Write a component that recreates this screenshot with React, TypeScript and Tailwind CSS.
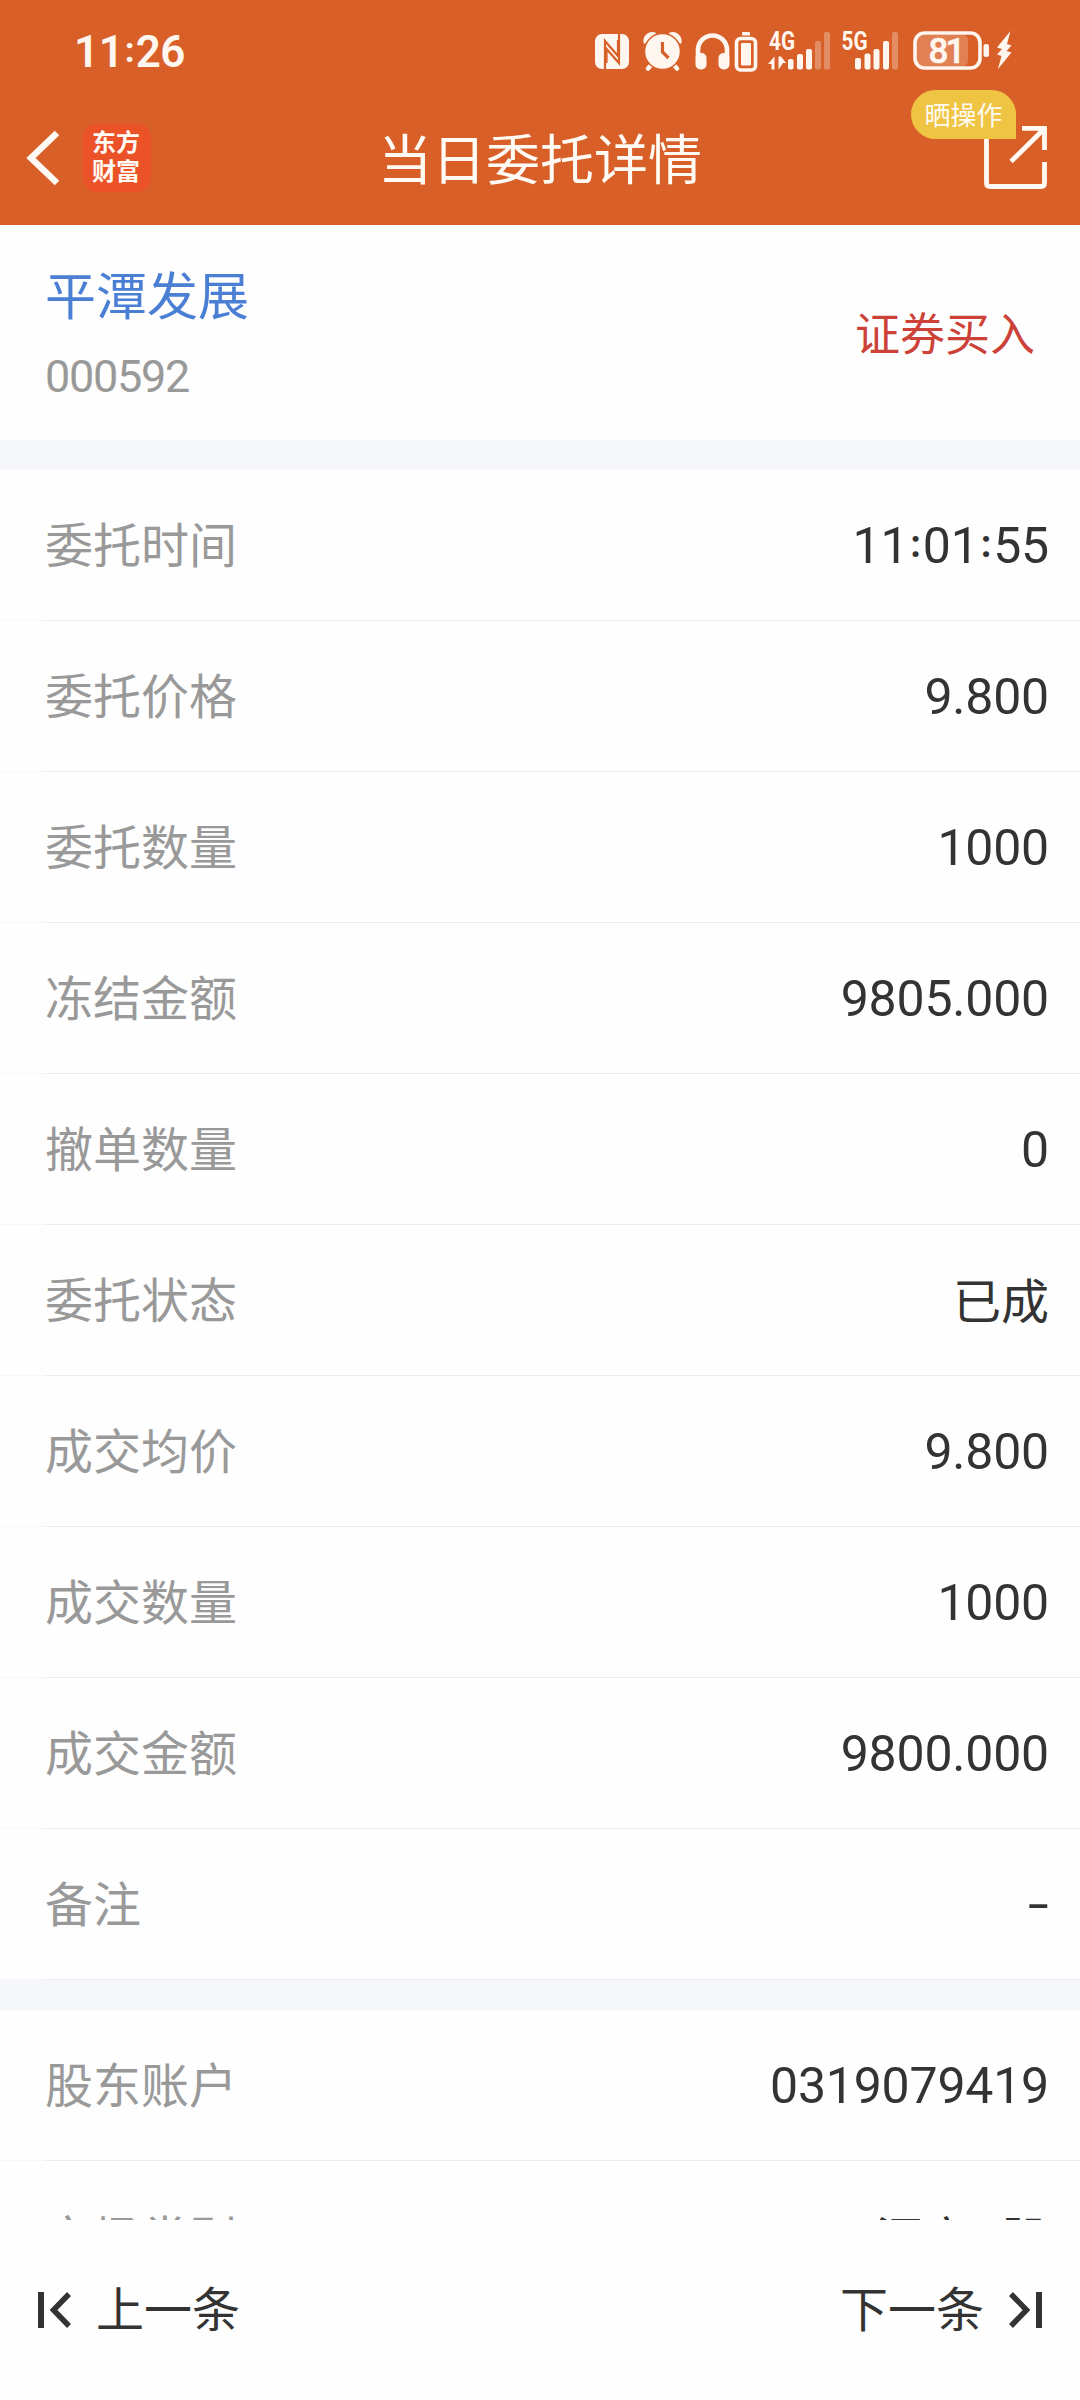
import React from "react";

const ROWS: [string, string][] = [
  ["委托时间", "11:01:55"],
  ["委托价格", "9.800"],
  ["委托数量", "1000"],
  ["冻结金额", "9805.000"],
  ["撤单数量", "0"],
  ["委托状态", "已成"],
  ["成交均价", "9.800"],
  ["成交数量", "1000"],
  ["成交金额", "9800.000"],
];

const ACCOUNT_ROWS: [string, string][] = [
  ["股东账户", "0319079419"],
  ["市场类别", "深市A股"],
];

function StatusIcons() {
  return (
    <svg className="block h-[60px] w-[440px]" viewBox="580 20 440 60" fill="#fff6ef">
      {/* NFC */}
      <rect x="595" y="34" width="34" height="35" rx="7" />
      <path d="M605 70V41L618 56V40M604 69M619 33V63L606.500 49V63" fill="none" stroke="#d85f28" strokeWidth="2.200" />
      {/* alarm */}
      <path d="M653 63l-5 5.500M672 63l5 5.500" stroke="#fff6ef" strokeWidth="4.500" strokeLinecap="round" />
      <path d="M644.500 43a8 8 0 0 1 11-9.500z M680.500 43a8 8 0 0 0-11-9.500z" stroke="#fff6ef" strokeWidth="1.500" strokeLinejoin="round" />
      <circle cx="662.500" cy="51.500" r="18" stroke="#d85f28" strokeWidth="1.500" />
      <path d="M662.500 42v10l6 6" fill="none" stroke="#d85f28" strokeWidth="3.200" />
      {/* headphones */}
      <path d="M698 58V50a14.500 14.500 0 0 1 29 0v8" fill="none" stroke="#fff6ef" strokeWidth="4.600" />
      <rect x="695.500" y="53" width="11" height="16.500" rx="5" />
      <rect x="718.500" y="53" width="11" height="16.500" rx="5" />
      {/* device battery */}
      <rect x="742" y="32" width="8" height="3.500" rx="1" />
      <rect x="736.500" y="38.500" width="19" height="31.500" rx="4" fill="none" stroke="#fff6ef" strokeWidth="3.600" />
      <rect x="741" y="43" width="10" height="22.500" rx="1" />
      {/* 4G signal */}
      <text x="769" y="50" fontSize="25" fontWeight="700" textLength="26" lengthAdjust="spacingAndGlyphs" fontFamily="Roboto, sans-serif">4G</text>
      <path d="M768 64l6.500-7.500v13h-3v-5.500zM778.500 56.500h2.500l5 6.500h-3l-4.500 6.500z" />
      <rect x="788" y="59" width="5.500" height="10.500" rx="2" />
      <rect x="797" y="54" width="6" height="15.500" rx="2" />
      <rect x="806" y="49" width="6" height="20.500" rx="2" />
      <g opacity="0.3">
        <rect x="815" y="41" width="6" height="28.500" rx="2" />
        <rect x="824" y="32" width="6" height="37.500" rx="2" />
      </g>
      {/* 5G signal */}
      <text x="841.500" y="50" fontSize="25" fontWeight="700" textLength="26" lengthAdjust="spacingAndGlyphs" fontFamily="Roboto, sans-serif">5G</text>
      <rect x="855" y="58" width="6" height="11.500" rx="2" />
      <rect x="864.500" y="53.500" width="6" height="16" rx="2" />
      <rect x="873.500" y="49" width="6" height="20.500" rx="2" />
      <rect x="883" y="41" width="6" height="28.500" rx="2" />
      <rect x="892" y="32" width="6" height="37.500" rx="2" opacity="0.3" />
      {/* battery */}
      <rect x="916" y="35" width="52" height="31" rx="5" opacity="0.22" />
      <rect x="915" y="33" width="65" height="35" rx="9.500" fill="none" stroke="#fff6ef" strokeWidth="3.600" />
      <text x="947" y="63" textAnchor="middle" fontSize="35" fontWeight="500" textLength="37" stroke="#fff6ef" strokeWidth="0.600" fontFamily="Roboto, sans-serif">81</text>
      <rect x="983.500" y="44" width="5.500" height="13" rx="2.500" />
      <path d="M1010.500 31l-13.500 16.500 5 1.500-5 5.500 4.500 1.500-3.500 13 13.500-16.500-5-1.500 5-5.500-4.500-1.500z" />
    </svg>
  );
}

function StepIcon({ flip = false }: { flip?: boolean }) {
  return (
    <svg className={flip ? "block h-9 w-[33px] -scale-x-100" : "block h-9 w-[33px]"} viewBox="0 0 33 36" fill="none" stroke="#333">
      <path d="M3 0v36" strokeWidth="6" />
      <path d="M31 2L15.500 18L31 34" strokeWidth="5.500" />
    </svg>
  );
}

/** Clock text whose colons sit centred on the digits. */
function Clock({ text, colonClass }: { text: string; colonClass: string }) {
  return (
    <>
      {text.split(":").map((part, i) => (
        <React.Fragment key={i}>
          {i > 0 && <span className={colonClass}>:</span>}
          {part}
        </React.Fragment>
      ))}
    </>
  );
}

function Value({ text }: { text: string }) {
  if (text === "-") {
    return <span className="inline-block origin-right scale-x-150 text-[50px] leading-none">-</span>;
  }
  if (/[^\x00-\x7f]/.test(text)) {
    return <span className="pb-[6px] font-['Noto_Sans_CJK_SC',sans-serif] text-[48px] leading-none">{text}</span>;
  }
  return (
    <span className="text-[50px] leading-none tracking-[-0.2px]">
      <Clock text={text} colonClass="relative -top-[6px] px-[2px] text-[38px] font-bold leading-none" />
    </span>
  );
}

function Row({ label, value, last = false }: { label: string; value: string; last?: boolean }) {
  return (
    <div
      className={
        last
          ? "flex h-[150px] shrink-0 items-center justify-between pl-[45px] pr-[31px]"
          : "relative flex h-[151px] shrink-0 items-center justify-between pl-[45px] pr-[31px]"
      }
    >
      <span className="pt-[3px] text-[48px] leading-none text-[#999]">{label}</span>
      <span className="flex text-[#333]">
        <Value text={value} />
      </span>
      {!last && (
        <span className="absolute inset-x-0 bottom-0 flex h-px">
          <span className="w-[45px] bg-[#f7f7f7]" />
          <span className="flex-1 bg-[#ededed]" />
        </span>
      )}
    </div>
  );
}

export default function App() {
  return (
    <div className="flex h-[2400px] w-[1080px] flex-col overflow-hidden bg-[#fefefe] font-[Roboto,'Noto_Sans_CJK_SC',sans-serif]">
      <header className="h-[225px] shrink-0 bg-[#d85f28] text-[#fffaf3]">
        <div className="flex h-[100px] items-center justify-between pl-[74px] pr-[60px]">
          <span className="pt-[4px] text-[44px] font-semibold leading-none tracking-[-0.5px] text-[#fff6ef]">
            <Clock text="11:26" colonClass="relative -top-[5px] px-[1.500px] text-[35px] font-bold leading-none" />
          </span>
          <StatusIcons />
        </div>
        <div className="relative flex h-[122px] items-center justify-center">
          <div className="absolute left-[26px] top-[24px] flex items-center gap-[24px]">
            <svg className="h-[56px] w-[33px]" viewBox="0 0 33 56" fill="none" stroke="currentColor" strokeWidth="6.500">
              <path d="M31 3L5 28L31 53" />
            </svg>
            <div className="flex size-[68px] flex-col items-center justify-center gap-[3px] rounded-[14px] bg-[#eb5228] pb-[5px] pr-[2px] font-['Noto_Sans_CJK_SC',sans-serif] text-[24px] font-bold leading-[26px]">
              <span>东方</span>
              <span>财富</span>
            </div>
          </div>
          <h1 className="pt-px text-[54px] leading-none">当日委托详情</h1>
          <svg className="absolute left-[983px] top-[24px] h-[68px] w-[65px]" viewBox="0 0 65 68" fill="none" stroke="currentColor" strokeWidth="4.800">
            <path d="M3.500 0V59Q3.500 62.500 7 62.500H58Q61.500 62.500 61.500 59V38M39 4.400H61.500V26M61 5L28 37.500" />
          </svg>
          <span className="absolute left-[911px] top-[-10px] flex h-[49px] w-[105px] items-center justify-center rounded-[25px] rounded-br-none bg-[#efc443] pt-[2px] text-[26px] leading-none">
            晒操作
          </span>
        </div>
      </header>

      <section className="flex h-[215px] shrink-0 items-center justify-between pl-[45px] pr-[45px]">
        <div className="flex flex-col pt-[8px]">
          <span className="relative top-px text-[51px] leading-[60px] text-[#4a7fd4]">平潭发展</span>
          <span className="mt-[20px] text-[45px] leading-[60px] tracking-[-1.300px] text-[#999]">000592</span>
        </div>
        <span className="pt-[5px] text-[45px] leading-none text-[#cc4238]">证券买入</span>
      </section>

      <div className="h-[30px] shrink-0 bg-[#f6f7fa]" />
      {ROWS.map(([label, value]) => (
        <Row key={label} label={label} value={value} />
      ))}
      <Row label="备注" value="-" last />
      <div className="h-[31px] shrink-0 bg-[#f6f7fa]">
        <div className="ml-[45px] h-px bg-[#ededed]" />
      </div>
      <div className="flex h-[210px] shrink-0 flex-col overflow-hidden">
        <Row label={ACCOUNT_ROWS[0][0]} value={ACCOUNT_ROWS[0][1]} />
        <div className="pt-[2px]">
          <Row label={ACCOUNT_ROWS[1][0]} value={ACCOUNT_ROWS[1][1]} />
        </div>
      </div>

      <footer className="flex min-h-0 flex-1 items-center justify-between px-[38px] text-[48px] leading-none text-[#333]">
        <div className="flex items-center gap-[25px]">
          <StepIcon />
          <span className="pt-[2px]">上一条</span>
        </div>
        <div className="flex items-center gap-[25px]">
          <span className="pt-[2px]">下一条</span>
          <StepIcon flip />
        </div>
      </footer>
    </div>
  );
}
